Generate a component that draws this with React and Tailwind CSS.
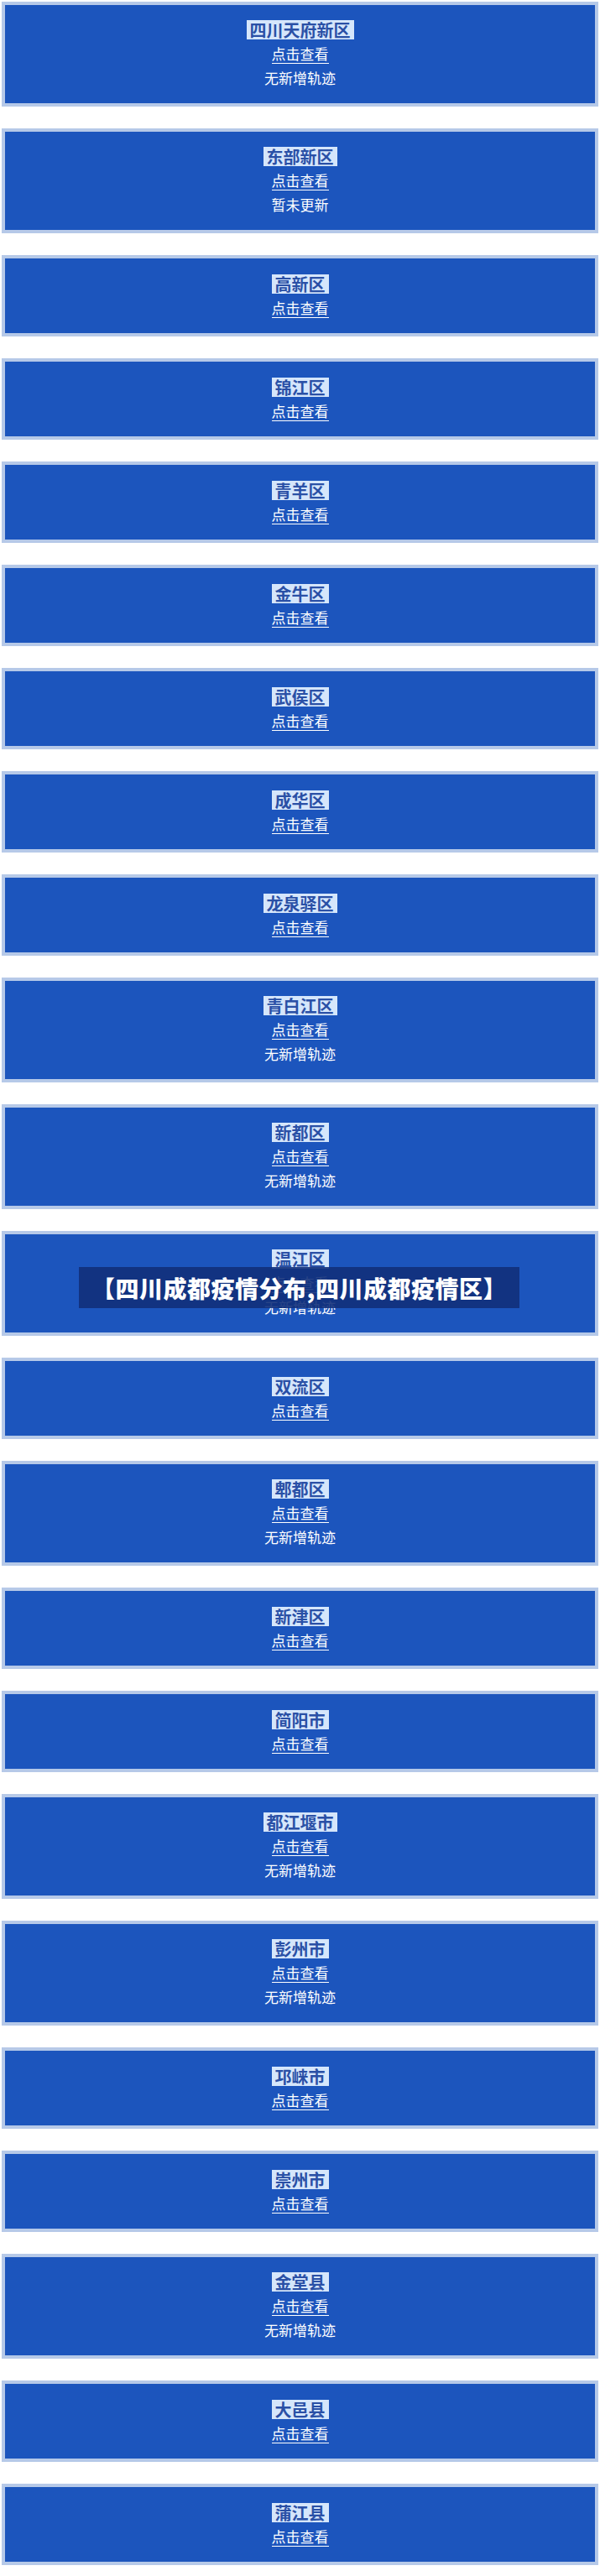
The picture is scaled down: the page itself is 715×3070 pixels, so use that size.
import React from "react";

const districts = [
  { name: "四川天府新区", note: "无新增轨迹" },
  { name: "东部新区", note: "暂未更新" },
  { name: "高新区" },
  { name: "锦江区" },
  { name: "青羊区" },
  { name: "金牛区" },
  { name: "武侯区" },
  { name: "成华区" },
  { name: "龙泉驿区" },
  { name: "青白江区", note: "无新增轨迹" },
  { name: "新都区", note: "无新增轨迹" },
  { name: "温江区", note: "无新增轨迹" },
  { name: "双流区" },
  { name: "郫都区", note: "无新增轨迹" },
  { name: "新津区" },
  { name: "简阳市" },
  { name: "都江堰市", note: "无新增轨迹" },
  { name: "彭州市", note: "无新增轨迹" },
  { name: "邛崃市" },
  { name: "崇州市" },
  { name: "金堂县", note: "无新增轨迹" },
  { name: "大邑县" },
  { name: "蒲江县" },
];

const font = { fontFamily: '"Noto Sans CJK SC", "Noto Sans", sans-serif' };

function Card({ name, note }) {
  return (
    <div className="mx-[2px] border-4 border-[#b6c9e8] bg-[#1c55bd]">
      <div
        className={
          "flex flex-col items-center " +
          (note ? "pt-[18px] pb-[18px]" : "pt-[19px] pb-[18px]")
        }
      >
        <div className="bg-[#d5e6fb] px-[4px] text-[20px] leading-[23px] font-bold text-[#2a50a6] h-[23px]">
          {name}
        </div>
        <div className="mt-[6px] border-b border-white text-[17px] leading-[22px] text-white">
          点击查看
        </div>
        {note && (
          <div className="mt-[5px] text-[17px] leading-[24px] text-white">{note}</div>
        )}
      </div>
    </div>
  );
}

export default function App() {
  return (
    <div className="relative w-[715px] h-[3070px] bg-white overflow-hidden" style={font}>
      <div className="flex flex-col gap-[26px] pt-[2px]">
        {districts.map((d) => (
          <Card key={d.name} name={d.name} note={d.note} />
        ))}
      </div>
      <div className="absolute left-[94px] top-[1510px] w-[525px] h-[49px] bg-[#12307a]/90 flex items-center justify-center">
        <span className="text-white text-[28px] font-black leading-none tracking-[0.5px]">
          【四川成都疫情分布,四川成都疫情区】
        </span>
      </div>
    </div>
  );
}
